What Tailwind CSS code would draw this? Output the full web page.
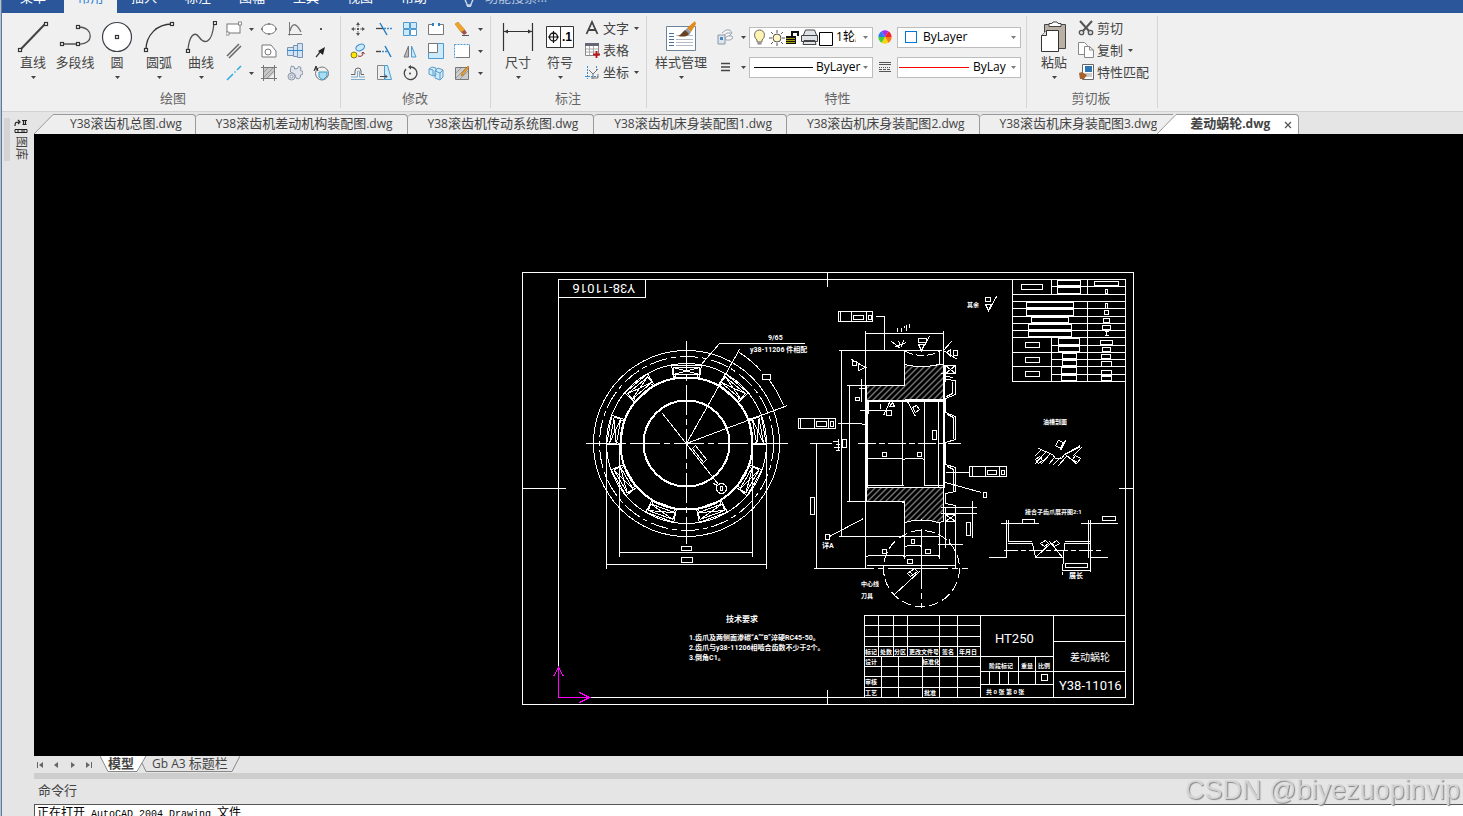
<!DOCTYPE html>
<html lang="zh-CN">
<head>
<meta charset="utf-8">
<title>差动蜗轮.dwg</title>
<script src="https://cdn.jsdelivr.net/npm/@tailwindcss/browser@4"></script>
</head>
<body class="h-screen overflow-hidden bg-[#e5e5e5] font-['Open_Sans','Noto_Sans_CJK_SC',sans-serif] text-[13px] leading-4 text-[#444]">
<svg class="hidden" aria-hidden="true">
  <symbol id="caret" viewBox="0 0 5 3"><path d="M0 0h5L2.500 3z" fill="#444"/></symbol>
  <symbol id="node" viewBox="0 0 4 4" overflow="visible"><rect x=".5" y=".5" width="3" height="3" fill="#fff" stroke="#333" stroke-width="1.200"/></symbol>
</svg>
<div class="flex h-full flex-col border-l border-[#a9c4e8]">
<div class="flex min-h-0 flex-1 flex-col border-l border-[#6a7683]">

<nav class="flex h-[13px] shrink-0 items-end overflow-hidden bg-[#2b579a] text-white" aria-label="菜单栏">
  <button class="h-6 w-[62px] pb-2 leading-4">菜单</button>
  <button class="h-6 w-[53px] bg-[#f0f0f0] pb-2 leading-4 text-[#2b7cd3]">常用</button>
  <button class="h-6 w-[54px] pb-2 leading-4">插入</button>
  <button class="h-6 w-[54px] pb-2 leading-4">标注</button>
  <button class="h-6 w-[54px] pb-2 leading-4">图幅</button>
  <button class="h-6 w-[54px] pb-2 leading-4">工具</button>
  <button class="h-6 w-[54px] pb-2 leading-4">视图</button>
  <button class="h-6 w-[54px] pb-2 leading-4">帮助</button>
  <label class="flex h-6 items-end pb-[6px] pl-5">
    <svg class="h-[14px] w-4" viewBox="0 0 16 14" fill="none" stroke="#c5d3e8" stroke-width="1.500"><path d="M4 5c0 4 2 4 2 7h4c0-3 2-3 2-7M6 13.500h4"/></svg>
    <input class="mb-[2px] ml-2 h-4 w-24 bg-transparent placeholder-[#b5c5de]" placeholder="功能搜索..." aria-label="功能搜索">
  </label>
</nav>

<section class="flex h-[99px] shrink-0 border-b border-[#d2d2d2] bg-[#f0f0f0] pl-[3px]">
  <!-- 绘图 -->
  <div class="my-[3px] flex flex-col border-r border-[#d5d5d5] pr-[6px] pl-[7px]">
    <div class="flex h-[74px] pt-[2px]">
      <button class="flex w-[42px] flex-col items-center whitespace-nowrap pt-[3px]">
        <svg class="h-8 w-8" viewBox="0 0 32 32"><path d="M4 28L28 3" stroke="#444" stroke-width="2"/><use href="#node" x="1" y="27" width="4" height="4"/><use href="#node" x="27" y="1" width="4" height="4"/></svg>
        <span class="mt-px">直线</span><svg class="mt-[6px] h-[3px] w-[5px]"><use href="#caret"/></svg>
      </button>
      <button class="flex w-[42px] flex-col items-center whitespace-nowrap pt-[3px]">
        <svg class="h-8 w-8" viewBox="0 0 32 32" fill="none"><path d="M3 23h17M20 23c15 1 15-17 0-17" stroke="#555" stroke-width="1.300"/><use href="#node" x="1" y="21" width="4" height="4"/><use href="#node" x="17" y="21" width="4" height="4"/><use href="#node" x="17" y="4" width="4" height="4"/></svg>
        <span class="mt-px">多段线</span>
      </button>
      <button class="flex w-[42px] flex-col items-center whitespace-nowrap pt-[3px]">
        <svg class="h-8 w-8" viewBox="0 0 32 32"><circle cx="16" cy="16" r="14.500" fill="#fff" stroke="#3b4049" stroke-width="1.200"/><use href="#node" x="14" y="14" width="4" height="4"/></svg>
        <span class="mt-px">圆</span><svg class="mt-[6px] h-[3px] w-[5px]"><use href="#caret"/></svg>
      </button>
      <button class="flex w-[42px] flex-col items-center whitespace-nowrap pt-[3px]">
        <svg class="h-8 w-8" viewBox="0 0 32 32" fill="none"><path d="M3 29C3 14 14 3 29 3" stroke="#333" stroke-width="1.300"/><use href="#node" x="1" y="27" width="4" height="4"/><use href="#node" x="27" y="1" width="4" height="4"/></svg>
        <span class="mt-px">圆弧</span><svg class="mt-[6px] h-[3px] w-[5px]"><use href="#caret"/></svg>
      </button>
      <button class="flex w-[42px] flex-col items-center whitespace-nowrap pt-[3px]">
        <svg class="h-8 w-8" viewBox="0 0 32 32" fill="none"><path d="M3 29C4 16 9 9 14 16s13 8 15-14" stroke="#555" stroke-width="1.300"/><use href="#node" x="1" y="28" width="4" height="4"/><use href="#node" x="28" y="0" width="4" height="4"/></svg>
        <span class="mt-px">曲线</span><svg class="mt-[6px] h-[3px] w-[5px]"><use href="#caret"/></svg>
      </button>
      <div class="grid h-[66px] grid-cols-[24px_10px_26px_26px_26px] grid-rows-3 place-items-center">
        <button aria-label="矩形"><svg class="size-4" viewBox="0 0 16 16"><rect x="1" y="3" width="13" height="9" fill="#fff" stroke="#777"/><rect x="0" y="11" width="3" height="3" fill="#fff" stroke="#777" stroke-width=".8"/><rect x="12.500" y="1" width="3" height="3" fill="#fff" stroke="#777" stroke-width=".8"/></svg></button>
        <button aria-label="矩形选项"><svg class="h-[3px] w-[5px]"><use href="#caret"/></svg></button>
        <button aria-label="椭圆"><svg class="size-4" viewBox="0 0 16 16"><ellipse cx="8" cy="8" rx="7" ry="5" fill="#fff" stroke="#777"/><path d="M7 2h2v2H7zM7 12h2v2H7zM0 7h2v2H0zM14 7h2v2h-2z" fill="#888"/></svg></button>
        <button aria-label="公式曲线"><svg class="size-4" viewBox="0 0 16 16" fill="none" stroke="#777"><path d="M2.500 1v13.500M1 13.500h14"/><path d="M3 10c2-8 6-9 11 1" stroke-width="1.300"/></svg></button>
        <button aria-label="点"><svg class="size-4" viewBox="0 0 16 16"><rect x="7" y="7" width="2" height="2" fill="#555"/></svg></button>
        <button aria-label="平行线"><svg class="size-4" viewBox="0 0 16 16" stroke="#666" stroke-width="1.500"><path d="M1 13L13 1M3 15L15 3"/></svg></button>
        <span></span>
        <button aria-label="孔"><svg class="size-4" viewBox="0 0 16 16" fill="#fff" stroke="#777"><path d="M1 2h9l5 6v6H1z"/><circle cx="7" cy="9" r="3"/></svg></button>
        <button aria-label="轴"><svg class="size-4" viewBox="0 0 16 16" fill="#cfe4f7" stroke="#7c93ad"><path d="M.5 4.500h6v8h-6zM6.500 2.500h4v11h-4zM10.500.5h5v14h-5z"/><path d="M0 7.500h16" stroke="#2f8ad0"/></svg></button>
        <button aria-label="箭头"><svg class="size-4" viewBox="0 0 16 16"><path d="M3 14l5-6" stroke="#333" stroke-width="1.200"/><path d="M12 4l-2 8-5-4z" fill="#222"/></svg></button>
        <button aria-label="中心线"><svg class="size-4" viewBox="0 0 16 16" stroke="#2fa8df" stroke-width="1.500"><path d="M1 15l6-6M8.500 7.500l1-1M11 5l4-4"/></svg></button>
        <button aria-label="中心线选项"><svg class="h-[3px] w-[5px]"><use href="#caret"/></svg></button>
        <button aria-label="剖面线"><svg class="size-4" viewBox="0 0 16 16" fill="none" stroke="#777"><path d="M2.500 2.500h11v11h-11z" fill="#c6c6c6"/><path d="M0 2.500h16M2.500 0v16M13.500 0v16M0 13.500h16"/><path d="M3 7l4-4M3 12l9-9M6 13l7-7" stroke="#999"/><path d="M13 8v5H8z" fill="#eee" stroke="none"/></svg></button>
        <button aria-label="齿轮"><svg class="size-4" viewBox="0 0 16 16" fill="#dfe4ec" stroke="#8a95a8"><path d="M3.500 3.500l1-2.500 3 1v2l3-.5 1-2 2.500 1-.5 3 2.500 1-.5 3-2 .5v2l-2 2-2.500-1-1.500-4-4-2z"/><circle cx="4.500" cy="11.500" r="3.500"/><circle cx="4.500" cy="11.500" r="1.500" fill="#fff"/></svg></button>
        <button aria-label="局部放大"><svg class="size-4" viewBox="0 0 16 16" fill="none" stroke="#777"><circle cx="9" cy="8.500" r="6.500"/><path d="M6 7h8v4l-4 4-4-3z" fill="#a9dcf5" stroke="#3c9cc8"/><path d="M1 6l2-5 2 5M2 4h3" stroke="#222"/></svg></button>
      </div>
    </div>
    <h2 class="text-center text-[#666]">绘图</h2>
  </div>
  <!-- 修改 -->
  <div class="my-[3px] flex flex-col border-r border-[#d5d5d5] pr-[5px] pl-1">
    <div class="flex h-[74px] pt-[2px]">
      <div class="grid h-[66px] grid-cols-[26px_26px_26px_26px_26px_10px] grid-rows-3 place-items-center">
        <button aria-label="移动"><svg class="size-4" viewBox="0 0 16 16" fill="#555"><path d="M7 7h2v2H7zM8 1l2 3H6zM8 15l2-3H6zM1 8l3-2v4zM15 8l-3-2v4z"/><path d="M7 4h2v2H7zM7 10h2v2H7zM4 7h2v2H4zM10 7h2v2h-2z" opacity=".4"/></svg></button>
        <button aria-label="裁剪"><svg class="size-4" viewBox="0 0 16 16"><path d="M0 7.500h7" stroke="#444" stroke-width="1.300"/><path d="M8 7.500h8" stroke="#3d8fd1" stroke-width="1.300" stroke-dasharray="2 1"/><path d="M4 2l7 12" stroke="#1e78c2" stroke-width="1.400"/></svg></button>
        <button aria-label="阵列"><svg class="size-4" viewBox="0 0 16 16" fill="#cdeafa" stroke="#4f9bd0"><path d="M1.500 1.500h6v6h-6zM8.500 1.500h6v6h-6zM1.500 8.500h6v6h-6z"/><path d="M8.500 8.500h6v6h-6z" fill="#fff"/></svg></button>
        <button aria-label="打断"><svg class="size-4" viewBox="0 0 16 16"><path d="M5 3.500H.5v10h15v-10H11" fill="#fff" stroke="#777"/><path d="M4 2h2v3H4zM10 2h2v3h-2z" fill="#2d82c6"/></svg></button>
        <button aria-label="删除"><svg class="size-4" viewBox="0 0 16 16"><path d="M1 3l3-2 7 8-4 2z" fill="#f2a427" stroke="#c77e12" stroke-width=".6"/><path d="M7 11l4-2 2 3-3 2z" fill="#9b5548"/><path d="M8 14.500h7" stroke="#555"/></svg></button>
        <button aria-label="删除选项"><svg class="h-[3px] w-[5px]"><use href="#caret"/></svg></button>
        <button aria-label="平移复制"><svg class="size-4" viewBox="0 0 16 16"><ellipse cx="10" cy="4.500" rx="4.500" ry="3" fill="#cdeafa" stroke="#3d8fd1" transform="rotate(-25 10 4)"/><circle cx="4" cy="12" r="3" fill="#ffe600" stroke="#8a7c22"/><path d="M8 13c3 1 5 0 5-3M11.500 10.500l1.500-1.500 1.500 2" fill="none" stroke="#8e2d2d"/></svg></button>
        <button aria-label="延伸"><svg class="size-4" viewBox="0 0 16 16"><path d="M0 8.500h5" stroke="#444" stroke-width="1.400"/><path d="M6 8.500h5" stroke="#3d8fd1" stroke-width="1.300" stroke-dasharray="2 1"/><path d="M9 3l6 11" stroke="#1e78c2" stroke-width="1.400"/></svg></button>
        <button aria-label="镜像"><svg class="size-4" viewBox="0 0 16 16"><path d="M6.500 3v11H2z" fill="#bbb" stroke="#777"/><path d="M9.500 3v11H14z" fill="#cdeafa" stroke="#4f9bd0"/></svg></button>
        <button aria-label="缩放"><svg class="size-4" viewBox="0 0 16 16"><path d="M.5.5h15v15H.5z" fill="#cdeafa" stroke="#4f9bd0"/><path d="M.5.5h9v9h-9z" fill="#fff" stroke="#777"/></svg></button>
        <button aria-label="拉伸"><svg class="size-4" viewBox="0 0 16 16"><path d="M.5 1.500h15v13H.5z" fill="#fff" stroke="#4f9bd0" stroke-dasharray="2 1"/><path d="M2 14.500h13.500v-11" fill="none" stroke="#777"/></svg></button>
        <button aria-label="拉伸选项"><svg class="h-[3px] w-[5px]"><use href="#caret"/></svg></button>
        <button aria-label="等距线"><svg class="size-4" viewBox="0 0 16 16" fill="none"><path d="M1 9.500h4V6a3 3 0 016 0v3.500h3" stroke="#666"/><path d="M1 12h6.500V7a1 1 0 012 0v5H15M1 14.500h14" stroke="#7eabcc"/></svg></button>
        <button aria-label="拉伸体"><svg class="size-4" viewBox="0 0 16 16"><path d="M1.500.5h7v14h-7z" fill="#eee" stroke="#888"/><path d="M8.500.5h3l4 14h-7z" fill="#cdeafa" stroke="#4f9bd0"/><path d="M4 11.500h7M9 9.500l2 2-2 2" fill="none" stroke="#444"/></svg></button>
        <button aria-label="旋转"><svg class="size-4" viewBox="0 0 16 16" fill="none" stroke="#444" stroke-width="1.300"><path d="M9 2a6.300 6.300 0 11-5 2"/><path d="M9 0v4.500L6 2z" fill="#444" stroke="none"/><circle cx="8" cy="8.500" r="1" fill="#444" stroke="none"/></svg></button>
        <button aria-label="分解"><svg class="size-4" viewBox="0 0 16 16" fill="#cdeafa" stroke="#5a9bc8"><path d="M1 4l3-2 4 1v7l-3 1-4-2zM7 6l3-3 5 2v7l-3 3-5-2z"/><path d="M7 6l5 2v7M12 8l3-3M1 4l4 1v6"/></svg></button>
        <button aria-label="编辑剖面"><svg class="size-4" viewBox="0 0 16 16"><path d="M1.500 2.500h13v12h-13z" fill="#ccc" stroke="#777"/><path d="M2 8l5-5M2 13L12 3M6 14l8-8" stroke="#999"/><path d="M15 2l-6 8-2 1 1-3 6-7z" fill="#f2a427" stroke="#a8660d" stroke-width=".6"/></svg></button>
        <button aria-label="编辑剖面选项"><svg class="h-[3px] w-[5px]"><use href="#caret"/></svg></button>
      </div>
    </div>
    <h2 class="text-center text-[#666]">修改</h2>
  </div>
  <!-- 标注 -->
  <div class="my-[3px] flex flex-col border-r border-[#d5d5d5] pr-[7px] pl-[6px]">
    <div class="flex h-[74px] pt-[2px]">
      <button class="flex w-[42px] flex-col items-center whitespace-nowrap pt-[3px]">
        <svg class="h-8 w-8" viewBox="0 0 32 32"><path d="M1.500 2v28M30.500 2v28M2 10.500h28" stroke="#333" stroke-width="1.200"/><path d="M2 10.500l4-2v4zM30 10.500l-4-2v4z" fill="#333"/></svg>
        <span class="mt-px">尺寸</span><svg class="mt-[6px] h-[3px] w-[5px]"><use href="#caret"/></svg>
      </button>
      <button class="flex w-[42px] flex-col items-center whitespace-nowrap pt-[3px]">
        <svg class="h-8 w-8" viewBox="0 0 32 32"><path d="M2.500 5.500h27v21h-27zM16.500 5.500v21" fill="#fff" stroke="#333"/><circle cx="9.500" cy="16" r="4" fill="none" stroke="#111" stroke-width="1.300"/><path d="M9.500 10v12M4 16h11" stroke="#111" stroke-width="1.200"/><text x="18" y="20" font-size="12" font-weight="700" fill="#000" font-family="Liberation Sans, sans-serif">.1</text></svg>
        <span class="mt-px">符号</span><svg class="mt-[6px] h-[3px] w-[5px]"><use href="#caret"/></svg>
      </button>
      <div class="-mt-px flex flex-col pl-[3px]">
        <button class="flex h-[22px] items-center whitespace-nowrap"><svg class="mr-[3px] size-4" viewBox="0 0 16 16"><path d="M2.500 14L8 2l5.500 12M4.500 10h7" fill="none" stroke="#444" stroke-width="1.800"/></svg>文字<svg class="ml-[5px] h-[3px] w-[5px]"><use href="#caret"/></svg></button>
        <button class="flex h-[22px] items-center whitespace-nowrap"><svg class="mr-[3px] size-4" viewBox="0 0 16 16"><path d="M1.500 1.500h13v12h-13z" fill="#fff" stroke="#888"/><path d="M1 1h14v3H1z" fill="#667"/><path d="M2 7h12M2 10h12M5.500 4v9M9.500 4v9" stroke="#aaa"/><path d="M12.500 9v7M9 12.500h7" stroke="#b8121b" stroke-width="1.800"/></svg>表格</button>
        <button class="flex h-[22px] items-center whitespace-nowrap"><svg class="mr-[3px] size-4" viewBox="0 0 16 16" fill="none"><path d="M3.500 2v13M1 12.500h13M12.500 2v6" stroke="#3d8fd1" stroke-dasharray="2 1"/><path d="M5 6l4 4 5-5M9 10v5M7 14h7v-4" stroke="#777"/></svg>坐标<svg class="ml-[5px] h-[3px] w-[5px]"><use href="#caret"/></svg></button>
      </div>
    </div>
    <h2 class="text-center text-[#666]">标注</h2>
  </div>
  <!-- 特性 -->
  <div class="my-[3px] flex flex-col border-r border-[#d5d5d5] pr-[5px] pl-[7px]">
    <div class="flex h-[74px] pt-[2px]">
      <button class="flex w-[54px] flex-col items-center whitespace-nowrap pt-[3px]">
        <svg class="h-8 w-8" viewBox="0 0 32 32"><path d="M1.500 5.500h29v24h-29z" fill="#fff" stroke="#6b839b"/><path d="M4 12.500h5M4 15.500h5M4 18.500h5M4 21.500h5M4 24.500h5" stroke="#4a6d91"/><path d="M11 14.500h17M11 18.500h17M11 21.500h17M11 24.500h17" stroke="#b4bac4"/><path d="M30 0l-8 7 4 4 5-8z" fill="#e08a1e"/><path d="M22 7l4 4-2 3-5-3z" fill="#8b98a8"/><path d="M20 9l4 4c-2 3-6 3-11 2 3-1 4-4 7-6z" fill="#6b3f22"/></svg>
        <span class="mt-px">样式管理</span><svg class="mt-[6px] h-[3px] w-[5px]"><use href="#caret"/></svg>
      </button>
      <div class="mt-[4px] grid h-[60px] grid-cols-[34px_7px_124px_24px_124px] grid-rows-2 place-items-center">
        <button aria-label="图层"><svg class="size-4" viewBox="0 0 16 16"><path d="M5 4l4-3h4l2 3-3 3M6 7l4-3h4M8 9l3-2h4l1 2-3 2-4 0z" fill="#f7f7f7" stroke="#9aa5b1"/><path d="M1 6h7v9H1z" fill="#dbe6ef" stroke="#8a98a8"/><path d="M3 8h3v3H3z" fill="#4a86b8"/></svg></button>
        <button class="-ml-1" aria-label="图层选项"><svg class="h-[3px] w-[5px]"><use href="#caret"/></svg></button>
        <div class="relative flex h-[21px] w-full items-center border border-[#bdbdbd] bg-white pl-[1px]">
          <svg class="h-[18px] w-[84px] shrink-0" viewBox="0 0 84 18"><path d="M6 12C2 9 3 2 8.500 2s6.500 7 2.500 10v2H6z" fill="#fff3b0" stroke="#666"/><path d="M6.500 14.500h4v2h-4z" fill="#888"/><circle cx="26" cy="10" r="4" fill="#fff8c0" stroke="#555"/><path d="M26 2v3M26 15v3M18 10h3M31 10h3M20 4l2 2M32 4l-2 2M20 16l2-2M32 16l-2-2" stroke="#555"/><path d="M35 8h10v8H35z" fill="#111"/><path d="M35 10.500h9M35 12.500h9M35 14.500h9" stroke="#a89c10"/><path d="M41 8V4h6v4" fill="none" stroke="#111" stroke-width="2"/><path d="M52.500 7l2-5h9l2 5M50.500 7.500h16v6h-16zM53 12.500h11l1 4H52z" fill="#dfe3e8" stroke="#444"/><path d="M68.500 4.500h13v13h-13z" fill="#fff" stroke="#000"/></svg>
          <select class="ml-[1px] w-[20px] flex-none appearance-none overflow-hidden bg-transparent text-xs text-black" aria-label="图层名"><option>1轮廓</option></select>
          <svg class="absolute right-1 h-[3px] w-[5px] opacity-70"><use href="#caret"/></svg>
        </div>
        <button aria-label="颜色"><svg class="size-4" viewBox="-8 -8 16 16"><path d="M0 0L-3.300-5.700A6.600 6.600 0 013.300-5.700z" fill="#a32ee8"/><path d="M0 0l3.300-5.700A6.600 6.600 0 016.600 0z" fill="#f0262b"/><path d="M0 0h6.600a6.600 6.600 0 01-3.300 5.700z" fill="#fb7b13"/><path d="M0 0l3.300 5.700a6.600 6.600 0 01-6.600 0z" fill="#f6d60f"/><path d="M0 0l-3.300 5.700A6.600 6.600 0 01-6.600 0z" fill="#45cf35"/><path d="M0 0h-6.600a6.600 6.600 0 013.300-5.700z" fill="#2d7df0"/></svg></button>
        <div class="relative flex h-[21px] w-full items-center border border-[#bdbdbd] bg-white pl-[7px]">
          <span class="mr-[6px] size-3 shrink-0 border border-[#0078d7]"></span>
          <select class="w-24 appearance-none bg-transparent text-xs text-black" aria-label="颜色"><option>ByLayer</option></select>
          <svg class="absolute right-1 h-[3px] w-[5px] opacity-70"><use href="#caret"/></svg>
        </div>
        <button aria-label="线型"><svg class="size-4" viewBox="0 0 16 16" stroke="#444"><path d="M4 4.500h9M4 8h9M4 11.500h9" stroke-width="1.300"/></svg></button>
        <button class="-ml-1" aria-label="线型选项"><svg class="h-[3px] w-[5px]"><use href="#caret"/></svg></button>
        <div class="relative flex h-[21px] w-full items-center border border-[#bdbdbd] bg-white pl-1">
          <span class="h-px w-[59px] shrink-0 bg-black"></span>
          <select class="ml-[3px] w-[46px] appearance-none bg-transparent text-xs text-black" aria-label="线型"><option>ByLayer</option></select>
          <svg class="absolute right-1 h-[3px] w-[5px] opacity-70"><use href="#caret"/></svg>
        </div>
        <button aria-label="线宽"><svg class="size-4" viewBox="0 0 16 16" stroke="#555"><path d="M2 3.500h12M2 5.500h12" /><path d="M2 8.500h12" stroke-dasharray="1 1"/><path d="M2 10.500h12" stroke-dasharray="3 1"/><path d="M2 12.500h12"/></svg></button>
        <div class="relative flex h-[21px] w-full items-center border border-[#bdbdbd] bg-white pl-[1px]">
          <span class="h-px w-[70px] shrink-0 bg-[#f00]"></span>
          <select class="ml-1 w-[33px] appearance-none overflow-hidden bg-transparent text-xs text-black" aria-label="线宽"><option>ByLayer</option></select>
          <svg class="absolute right-1 h-[3px] w-[5px] opacity-70"><use href="#caret"/></svg>
        </div>
      </div>
    </div>
    <h2 class="text-center text-[#666]">特性</h2>
  </div>
  <!-- 剪切板 -->
  <div class="my-[3px] flex flex-col border-r border-[#d5d5d5] pr-2 pl-[6px]">
    <div class="flex h-[74px] pt-[2px]">
      <button class="flex w-[42px] flex-col items-center whitespace-nowrap pt-[3px]">
        <svg class="h-8 w-8" viewBox="0 0 32 32"><path d="M6.500 3.500h21v24h-21z" fill="#b9b1a5" stroke="#444"/><path d="M11 5.500v-3h3l1-1.500h4l1 1.500h3v3z" fill="#fff" stroke="#444"/><path d="M8.500 9.500h12v21h-17v-16z" fill="#fff" stroke="#333"/><path d="M8.500 9.500v5h-5" fill="#ddd" stroke="#333"/></svg>
        <span class="mt-px">粘贴</span><svg class="mt-[6px] h-[3px] w-[5px]"><use href="#caret"/></svg>
      </button>
      <div class="-mt-px flex flex-col pl-[3px]">
        <button class="flex h-[22px] items-center whitespace-nowrap"><svg class="mr-[3px] size-4" viewBox="0 0 16 16" fill="none" stroke="#555"><path d="M2 1l9 10M14 1L5 11" stroke-width="2"/><circle cx="3.500" cy="12.500" r="2.200" fill="#ddd" stroke-width="1.300"/><circle cx="12.500" cy="12.500" r="2.200" fill="#ddd" stroke-width="1.300"/></svg>剪切</button>
        <button class="flex h-[22px] items-center whitespace-nowrap"><svg class="mr-[3px] size-4" viewBox="0 0 16 16" fill="#fff" stroke="#888"><path d="M.5.5h6l3 3v9h-9z"/><path d="M6.500 4.500h5l4 3.500v7.500h-9z"/><path d="M11.500 4.500v3.500h4" fill="none"/></svg>复制<svg class="ml-[5px] h-[3px] w-[5px]"><use href="#caret"/></svg></button>
        <button class="flex h-[22px] items-center whitespace-nowrap"><svg class="mr-[3px] size-4" viewBox="0 0 16 16"><path d="M4.500.5h11v15h-11z" fill="#fff" stroke="#666"/><path d="M7 2h7v6H7z" fill="#2f76b5"/><path d="M7 10h7M7 12h7" stroke="#999"/><path d="M1 9l3-1 5 3-3 4H2z" fill="#a8622c"/></svg>特性匹配</button>
      </div>
    </div>
    <h2 class="text-center text-[#666]">剪切板</h2>
  </div>
</section>

<div class="flex min-h-0 flex-1">
  <aside class="flex w-8 shrink-0 justify-between pt-[6px] pr-[6px] pl-[2px]">
    <div class="h-[43px] w-[6px] bg-[#d4d4d4]"></div>
    <button class="flex w-[14px] flex-col items-center gap-[2px] self-start">
      <svg class="h-4 w-[14px]" viewBox="0 0 14 16" fill="none" stroke="#222"><path d="M1 8c0-4 1-4 4-4M4 2l2 2-2 2M8 2.500h5M9.500 2v5M11.500 2v5M8.500 6.500h4" stroke-width="1.200"/><path d="M1 11.500h12v3H1zM3 13h2M7 13h4"/></svg>
      <span class="text-xs leading-[14px] [writing-mode:vertical-rl] [text-orientation:sideways]">图库</span>
    </button>
  </aside>
  <div class="flex min-w-0 flex-1 flex-col">
    <div class="flex h-[22px] shrink-0 pt-[2px] leading-[17px]" role="tablist">
      <svg class="h-5 w-5 shrink-0" viewBox="0 0 20 20"><path d="M0 20L19 .5H20V20z" fill="#eee"/><path d="M0 20L19 .5H20" fill="none" stroke="#999"/></svg>
      <button class="shrink-0 rounded-tr border-t border-r border-[#999] bg-[#eee] pr-[13px] pb-[2px] pl-4" role="tab"><span class="text-xs">Y38</span>滚齿机总图<span class="text-xs">.dwg</span></button>
      <button class="shrink-0 rounded-t border-t border-r border-[#999] bg-[#eee] pr-[14px] pb-[2px] pl-5" role="tab"><span class="text-xs">Y38</span>滚齿机差动机构装配图<span class="text-xs">.dwg</span></button>
      <button class="shrink-0 rounded-t border-t border-r border-[#999] bg-[#eee] pr-[15px] pb-[2px] pl-5" role="tab"><span class="text-xs">Y38</span>滚齿机传动系统图<span class="text-xs">.dwg</span></button>
      <button class="shrink-0 rounded-t border-t border-r border-[#999] bg-[#eee] pr-[14px] pb-[2px] pl-5" role="tab"><span class="text-xs">Y38</span>滚齿机床身装配图<span class="text-xs">1.dwg</span></button>
      <button class="shrink-0 rounded-t border-t border-r border-[#999] bg-[#eee] pr-[14px] pb-[2px] pl-5" role="tab"><span class="text-xs">Y38</span>滚齿机床身装配图<span class="text-xs">2.dwg</span></button>
      <button class="shrink-0 rounded-tl border-t border-[#999] bg-[#eee] pb-[2px] pl-5" role="tab"><span class="text-xs">Y38</span>滚齿机床身装配图<span class="text-xs">3.dwg</span></button>
      <svg class="h-5 w-5 shrink-0" viewBox="0 0 20 20"><path d="M0 0h20v20H0z" fill="#eee"/><path d="M0 .5h16" stroke="#999"/><path d="M0 20L19 .5H20V20z" fill="#fff"/><path d="M0 20L19 .5H20" fill="none" stroke="#999"/></svg>
      <div class="flex shrink-0 items-center rounded-tr border-t border-r border-[#999] bg-white pr-[6px] pl-[13px]">
        <button class="pb-[2px] font-bold leading-[17px]" role="tab" aria-selected="true">差动蜗轮<span class="text-xs">.dwg</span></button>
        <button class="ml-[14px]" aria-label="关闭"><svg class="size-2" viewBox="0 0 8 8" stroke="#555" stroke-width="1.300"><path d="M1 1l6 6M7 1L1 7"/></svg></button>
      </div>
    </div>

    <main class="relative min-h-0 flex-1 overflow-hidden bg-black">
      <svg class="absolute top-0 left-0" width="1429" height="622" viewBox="34 134 1429 622" font-family="Roboto, 'Noto Sans CJK SC', sans-serif" role="img" aria-label="差动蜗轮零件图">
        <defs>
          <pattern id="hatch" width="6" height="6" patternUnits="userSpaceOnUse"><path d="M-1 7L7-1M-1 1l2-2M5 7l2-2" stroke="#fff" stroke-width=".9" shape-rendering="geometricPrecision"/></pattern>
          <g id="tooth"><path d="M-15-79l2 14M15-79l-2 14M-13-76h26v7h-26zM-13-76l26 7M13-76l-26 7M-11-69l-1 4h24l-1-4M-15-78.500h30"/></g>
          <g id="half"><use href="#tooth" transform="rotate(40)"/><use href="#tooth" transform="rotate(80)"/><use href="#tooth" transform="rotate(120)"/><use href="#tooth" transform="rotate(160)"/></g>
        </defs>
        <g transform="translate(.5 .5)" fill="none" stroke="#fff" shape-rendering="crispEdges">
          <!-- 图框 -->
          <path d="M522 272h611v432H522zM558 279h567v418H558zM558 297h87v-18M827 272v14M827 689v15M522 488h43M1118 488h15"/>
          <!-- 端面视图 -->
          <g transform="translate(686 443)">
            <circle r="93"/><circle r="87" stroke-dasharray="18 4 5 4"/><circle r="80"/>
            <circle r="66" stroke-width="2"/><circle r="43" stroke-width="2"/>
            <use href="#tooth"/><use href="#half"/><use href="#tooth" transform="rotate(200)"/><use href="#tooth" transform="rotate(240)"/><use href="#tooth" transform="rotate(280)"/><use href="#tooth" transform="rotate(320)"/>
            <path d="M-101 0H101M0-103V100" stroke-dasharray="30 4 6 4"/>
            <path d="M0 0L53-94M0 0l101-38M-24-30L32 41M53-91A105 105 0 0175-72M83-63A105 105 0 0197-38"/>
            <path d="M14-78l19-22h85M76-69h8v5h-8z"/>
            <path d="M6 5l11 14 3-3L9 2z"/>
            <circle cx="35" cy="45" r="5"/><path d="M34 43h2v4h-2zM27 40l4 2"/>
          </g>
          <path d="M606 443v125M766 443v125M619 443v113M752 443v113M619 552h133M606 564h160M681 546h10v4h-10zM681 557h11v5h-11z"/>
          <!-- 剖视图 -->
          <path d="M838 311h34v10h-34zM840 311v10M851 311v10M866 311v10M853 315h10v4h-10zM868 315h3v4h-3zM875 316h9v34"/>
          <path d="M865 333h78M865 330v238M943 330v34M897 327v4M901 327v4M904 325v2M906 324v6M909 323v4"/>
          <path d="M838 350h103M904 350v35M939 350v13M846 385h58M841 350v185M849 385v116"/>
          <path d="M905 351q17 8 34 0" stroke-dasharray="8 3"/>
          <path d="M866 385h38v-21q17 4 35 0h4v36h-77z" fill="url(#hatch)"/>
          <path d="M866 401h77M902 401v84M924 401v84M938 398v89M904 399h39M868 401v12"/>
          <path d="M866 400v87M943 364v123" stroke-width="2"/>
          <path d="M891 341l9 7M895 346l11-4M898 341l4 6M903 340l-2 6M918 338h8v4h-8zM918 344h6l-3 6zM924 345l5-9M943 350l8-9M943 350l14 9M946 352l4-3v7zM953 350h4v5h-4z"/>
          <path d="M852 361h4v4h-4zM851 359l14 8-7 3v-8M861 378v12M858 388h7M861 385v16M855 397h4v3h-4zM859 410h25M880 403v5"/>
          <path d="M883 415l6-13M889 406l3-4 2 4zM886 410h5v5h-5zM907 401l8 15M912 407l4-2 3 4-4 3zM932 430h4v9h-4z"/>
          <path d="M945 365h10v8h-10zM945 365l10 8M955 365l-10 8M940 373h5v8M945 379l10 1v14l-10 4v14l10 4v23l-10 3v22l10 3v24l-10 2v10l10 2v10M945 376l8 1M952 381v12l-6 3M947 414l6 3v21M947 466l6 3v21"/>
          <path d="M798 418h37v10h-37zM800 418v10M814 418v10M828 418v10M816 421h10v5h-10zM830 421h3v5h-3zM837 423h20l8 1"/>
          <path d="M809 443h22M838 438v11M832 441h6M835 444h4M833 447h6M835 450h4M842 439h4v8h-4z"/>
          <path d="M857 443h103" stroke-dasharray="18 3 6 3"/>
          <path d="M816 443v125M810 497h4v17h-4zM882 452h4v4h-4zM917 452h4v4h-4zM866 459l3-1h32l2 1 3-1h15l3 1M866 485h37M924 485h19"/>
          <path d="M866 487h77v34l-5 1q-17-5-34 0v-19l-3-2h-35z" fill="url(#hatch)"/>
          <path d="M846 501h58M904 501v57M838 536h101M939 521v37M945 507v40M955 515v53M866 556l3-1h33l2 1 3-1h30l2 1M905 546l3-1h11l2 1M882 549h4v4h-4zM911 539h3v4h-3zM925 549h5v4h-5zM907 559h5v4h-5zM866 565h89"/>
          <path d="M813 568h154M921 528v79" stroke-dasharray="60 4 6 4"/>
          <circle cx="921" cy="568" r="38" stroke-dasharray="10 4"/>
          <path d="M894 594l26-24M907 573l7-5 3 3-7 5zM909 571l3 3M829 536l34-18M825 534h4v5h-4z"/>
          <path d="M969 466h37v10h-37zM972 466v10M985 466v10M999 466v10M987 470h9v4h-9zM1001 470h3v4h-3zM945 472h24M945 482l36 10M983 492h3v5h-3zM966 522h4v13h-4zM972 500v37M940 507h36M940 513h36M945 514h10v7h-10zM945 514l10 7M955 514l-10 7M937 544h25M949 538v4"/>
          <path d="M985 297h5v4h-5zM985 304h6l-3 6zM989 309l7-13"/>
          <!-- 参数表 -->
          <path d="M1012 279v102h113M1051 279v15M1087 279v15M1012 294h113M1012 301h113M1012 308h113M1012 316h113M1012 323h113M1012 330h113M1012 337h113M1051 286h74M1051 337v44M1087 301v80M1051 345h74M1012 352h113M1051 359h74M1012 366h113M1051 374h74"/>
          <path d="M1021 284h21v5h-21zM1025 342h14v5h-14zM1025 357h14v5h-14zM1025 371h14v5h-14zM1026 302h47v5h-47zM1026 309h47v6h-47zM1031 317h37v5h-37zM1028 324h43v5h-43zM1028 331h43v5h-43zM1057 280h23v5h-23zM1057 287h23v6h-23zM1058 338h21v6h-21zM1058 346h21v5h-21zM1062 353h14v5h-14zM1062 360h14v5h-14zM1061 367h15v6h-15zM1061 375h15v5h-15z"/>
          <path d="M1094 281h24v4h-24zM1105 289h2v4h-2zM1105 303h2v5h-2zM1104 310h4v4h-4zM1103 318h6v4h-6zM1102 325h8v4h-8zM1104 331h4M1106 331v4M1104 335h4M1100 340h12v4h-12zM1102 347h8v4h-8zM1101 354h9v4h-9zM1101 361h10v5h-10zM1101 370h10v5h-10zM1101 376h10v4h-10z"/>
          <!-- 油槽剖面 -->
          <path d="M1038 448l14 6 3 4h6l3-4 16-8M1034 456l6-6M1034 464l11-12M1040 464l10-11M1048 464l6-7M1052 465l8-8M1057 466l9-10M1060 450l5-10M1066 455l11 9M1058 440l5 2-3 6-5-3zM1035 459l4-3 3 4-4 3zM1075 455l5 3-3 4-5-3zM1066 453l14-8M1072 456l9-9"/>
          <!-- 展开图 -->
          <path d="M1000 523h38M1080 523h37M1006 519v38M1008 519v22l-1 1M1088 519v38M1090 519v52M1022 519h12v4h-12zM1102 516h13v4h-13zM988 557h18M1035 557h27M1090 557h17M1007 543h25l3 14M1008 541h23M1089 543h-25l-2 28M1064 541h25M1035 557l16-15M1049 541l13 16M1040 543l5-3 3 3-4 3zM1052 543l4-3 3 3-5 3zM1062 571v3M1062 570h28M1065 563h22v4h-22z"/>
          <path d="M1003 550h100" stroke-dasharray="14 3 5 3"/>
          <!-- 标题栏 -->
          <path d="M864 697v-82h261M980 615v82M1053 615v82M864 625h116M864 636h116M864 646h116M864 656h189M864 666h116M864 676h116M864 687h116M878 615v41M893 615v41M907 615v41M939 615v82M957 615v82M881 656v41M898 656v41M922 656v41M1053 641h72M1053 671h72M980 671h73M980 684h73M1018 656v28M1035 656v28M989 671v13M999 671v13M1008 671v13M1041 674h6v6h-6z"/>
          <!-- 坐标系 -->
          <path d="M558 697v-29M553 676l5-9 5 9M558 697h30M579 692l10 5-10 5" stroke="#f0f"/>
        </g>
        <g fill="#fff" font-size="7" font-weight="700">
          <text x="1059" y="690" font-size="13" font-weight="400">Y38-11016</text>
          <text transform="translate(635 284) rotate(180)" font-size="13" font-weight="400">Y38-11016</text>
          <text x="995" y="643" font-size="13" font-weight="400">HT250</text>
          <text x="1070" y="661" font-size="10" font-weight="400">差动蜗轮</text>
          <text x="768" y="340">9/65</text>
          <text x="750" y="352">y38-11206 件相配</text>
          <text x="967" y="307" font-size="6">其余</text>
          <text x="1043" y="424" font-size="6">油槽剖面</text>
          <text x="1025" y="514" font-size="6">接合子齿爪展开图2:1</text>
          <text x="1069" y="578" font-size="7">展长</text>
          <text x="822" y="548" font-size="7">详A</text>
          <text x="861" y="586" font-size="6">中心线</text>
          <text x="861" y="598" font-size="6">刀具</text>
          <text x="726" y="622" font-size="8">技术要求</text>
          <text x="689" y="640">1.齿爪及两侧面渗碳“A”“B”淬硬RC45-50。</text>
          <text x="689" y="650">2.齿爪与y38-11206相啮合齿数不少于2个。</text>
          <text x="689" y="660">3.倒角C1。</text>
          <g font-size="6">
            <text x="865" y="654">标记</text><text x="880" y="654">处数</text><text x="894" y="654">分区</text><text x="909" y="654">更改文件号</text><text x="942" y="654">签名</text><text x="959" y="654">年月日</text>
            <text x="865" y="664">设计</text><text x="922" y="664">标准化</text><text x="865" y="684">审核</text><text x="865" y="695">工艺</text><text x="924" y="695">批准</text>
            <text x="989" y="668">阶段标记</text><text x="1021" y="668">重量</text><text x="1038" y="668">比例</text><text x="986" y="694">共 0 张 第 0 张</text>
          </g>
        </g>
      </svg>
    </main>

    <div class="flex h-[17px] shrink-0 items-start" role="tablist">
      <div class="flex h-[17px] w-[66px] shrink-0 items-center justify-between pr-[7px] pl-[2px]">
        <button aria-label="第一页"><svg class="size-2" viewBox="0 0 8 8" fill="#666"><path d="M1 1h1v6H1zM7 1v6L3 4z"/></svg></button>
        <button aria-label="上一页"><svg class="size-2" viewBox="0 0 8 8" fill="#666"><path d="M6 1v6L2 4z"/></svg></button>
        <button aria-label="下一页"><svg class="size-2" viewBox="0 0 8 8" fill="#666"><path d="M2 1v6l4-3z"/></svg></button>
        <button aria-label="最后一页"><svg class="size-2" viewBox="0 0 8 8" fill="#666"><path d="M6 1h1v6H6zM1 1v6l4-3z"/></svg></button>
      </div>
      <svg class="h-4 w-2 shrink-0" viewBox="0 0 8 16"><path d="M0 0l8 15.500V0z" fill="#fff"/><path d="M0 0l8 15.500" stroke="#888"/></svg>
      <button class="h-4 shrink-0 border-b border-[#888] bg-white pb-px font-bold leading-[14px]" role="tab" aria-selected="true">模型</button>
      <svg class="h-4 w-[18px] shrink-0" viewBox="0 0 18 16"><path d="M0 0h12L4 15.500H0z" fill="#fff"/><path d="M12 0L3 15.500H0M8 7l4 8.500h6" fill="none" stroke="#888"/></svg>
      <button class="h-4 shrink-0 border-b border-[#888] pb-px leading-[14px]" role="tab"><span class="text-xs">Gb A3 </span>标题栏</button>
      <svg class="h-4 w-3 shrink-0" viewBox="0 0 12 16"><path d="M12 0L4 15.500H0" fill="none" stroke="#888"/></svg>
    </div>
    <div class="h-[6px] shrink-0 bg-[#cdcdcd]"></div>
    <h2 class="h-[25px] shrink-0 pl-1 leading-[22px]">命令行</h2>
    <div class="h-3 shrink-0 border-t border-l border-[#555] bg-white">
      <output class="block h-full overflow-hidden pl-[2px] font-['Liberation_Mono','Noto_Sans_CJK_SC',monospace] text-xs leading-[18px] whitespace-pre text-black">正在打开<span class="text-[10px]"> AutoCAD 2004 Drawing </span>文件</output>
    </div>
  </div>
</div>
</div>
</div>
<div class="pointer-events-none fixed right-[3px] bottom-2 font-['Liberation_Sans',sans-serif] text-[27px] leading-9 text-[#d8d8d8]/90 [text-shadow:1px_1px_1px_#888]">CSDN @biyezuopinvip</div>
</body>
</html>
